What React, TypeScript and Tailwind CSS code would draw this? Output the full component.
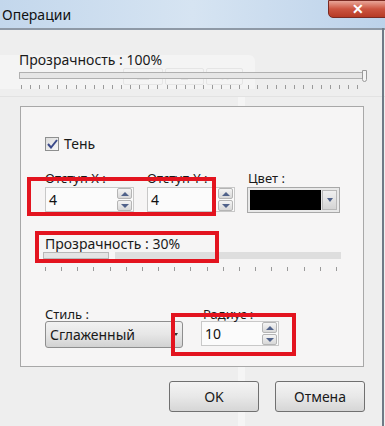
import React from "react";

const FONT = { fontFamily: '"Noto Sans", "Open Sans", "Liberation Sans", sans-serif' };

function Spin() {
  return (
    <div className="flex flex-col gap-[1px] mr-[1px]">
      <div className="w-[15px] h-[11px] border border-[#b5b5b5] rounded-[2px] bg-gradient-to-b from-[#f4f4f4] to-[#d8d8d8] flex items-center justify-center">
        <div className="w-0 h-0 border-l-[4px] border-r-[4px] border-b-[4px] border-l-transparent border-r-transparent border-b-[#50628a]" />
      </div>
      <div className="w-[15px] h-[11px] border border-[#b5b5b5] rounded-[2px] bg-gradient-to-b from-[#f4f4f4] to-[#d8d8d8] flex items-center justify-center">
        <div className="w-0 h-0 border-l-[4px] border-r-[4px] border-t-[4px] border-l-transparent border-r-transparent border-t-[#50628a]" />
      </div>
    </div>
  );
}

function NumBox({ value, w }: { value: string; w: string }) {
  return (
    <div className={`${w} h-[25px] border border-[#c8c8c8] bg-white/60 flex items-center justify-between pl-[3px]`}>
      <span className="text-[14px] text-[#111]">{value}</span>
      <Spin />
    </div>
  );
}

function Ticks({ n }: { n: number }) {
  return (
    <div className="flex justify-between">
      {Array.from({ length: n }).map((_, i) => (
        <div key={i} className="w-[1px] h-[4px] bg-[#9a9a9a]" />
      ))}
    </div>
  );
}

export default function App() {
  return (
    <div className="w-[385px] h-[426px] overflow-hidden relative bg-[#eeeeee] text-[#1a1a1a]" style={FONT}>
      {/* title bar */}
      <div className="h-[28px] bg-gradient-to-r from-[#c3d7ec] via-[#d6e4f2] to-[#bcd2ea] flex items-center pl-[2px] relative">
        <span className="text-[14px] text-[#111]">Операции</span>
        <div className="absolute right-[-6px] top-0 w-[63px] h-[18px] rounded-b-[5px] border border-[#7a2a22] bg-gradient-to-b from-[#e8a598] via-[#cc5440] to-[#b63a25] flex items-center justify-center">
          <span className="text-white text-[14px] font-bold leading-none mr-[4px]">✕</span>
        </div>
      </div>
      <div className="h-[2px] bg-[#8e99a6]" />

      {/* ghost window behind */}
      <div className="absolute left-0 top-[55px] w-[255px] h-[34px] bg-white/35 rounded-tr-[6px]" />
      <div className="absolute left-[123px] top-[68px] flex gap-[2px] opacity-40">
        <div className="w-[40px] h-[17px] border border-[#cfcfcf] rounded-[2px] flex items-end justify-center pb-[4px]"><div className="w-[12px] h-[3px] bg-[#cfcfcf]" /></div>
        <div className="w-[39px] h-[17px] border border-[#cfcfcf] rounded-[2px] flex items-center justify-center"><div className="w-[7px] h-[6px] border border-[#cfcfcf]" /></div>
        <div className="w-[37px] h-[17px] border border-[#cfcfcf] rounded-[2px] flex items-center justify-center text-[#cfcfcf] text-[12px]">✕</div>
      </div>
      <div className="absolute left-0 top-[96px] w-[385px] h-[1px] bg-[#e2e2e2]" />
      <div className="absolute left-[238px] top-[97px] w-[7px] h-[329px] bg-white/40" />
      <div className="absolute right-[1px] top-[28px] w-[2px] h-[398px] bg-[#6f7a86]" />

      <div className="relative">
        {/* top transparency */}
        <div className="pl-[19px] pr-[20px] pt-[22px]">
          <div className="text-[14px] leading-[16px]">Прозрачность : 100%</div>
          <div className="relative mt-[4px] h-[7px] border border-[#b0b0b0] bg-[#e6e6e6]">
            <div className="absolute right-[-3px] top-[-3px] w-[5px] h-[12px] rounded-b-[3px] border border-[#9a9a9a] bg-[#f4f4f4]" />
          </div>
          <div className="mt-[6px] pl-[2px] pr-[6px]">
            <Ticks n={38} />
          </div>
        </div>

        {/* group box */}
        <div className="ml-[20px] mt-[17px] w-[344px] h-[261px] border border-[#a8a8a8] bg-[#f6f5f5] pl-[24px] pt-[26px]">
          <div className="flex items-center gap-[5px]">
            <div className="w-[14px] h-[14px] border border-[#8e8f8f] bg-gradient-to-br from-[#dcdcdc] to-[#f8f8f8] flex items-center justify-center">
              <svg width="11" height="10" viewBox="0 0 11 10">
                <path d="M1 5 L4 8.5 L10 1" stroke="#3b4a8a" strokeWidth="2" fill="none" />
              </svg>
            </div>
            <span className="text-[14px]">Тень</span>
          </div>

          <div className="flex mt-[16px]">
            <div className="w-[102px]">
              <div className="text-[13px] leading-[17px]">Отступ X :</div>
              <NumBox value="4" w="w-[89px]" />
            </div>
            <div className="w-[100px]">
              <div className="text-[13px] leading-[17px]">Отступ Y :</div>
              <NumBox value="4" w="w-[88px]" />
            </div>
            <div className="w-[94px]">
              <div className="text-[13px] leading-[17px] pl-[1px]">Цвет :</div>
              <div className="w-[93px] h-[26px] border border-[#a8a8a8] bg-[#e8e8e8] flex items-center p-[2px] gap-[1px]">
                <div className="flex-1 h-full bg-black" />
                <div className="w-[15px] h-full border border-[#b8b8b8] bg-gradient-to-b from-[#f0f0f0] to-[#d4d4d4] flex items-center justify-center">
                  <div className="w-0 h-0 border-l-[3px] border-r-[3px] border-t-[4px] border-l-transparent border-r-transparent border-t-[#50628a]" />
                </div>
              </div>
            </div>
          </div>

          <div className="mt-[23px] text-[14px] leading-[16px]">Прозрачность : 30%</div>
          <div className="w-[298px] -ml-[2px] h-[7px] flex">
            <div className="w-[66px] h-full border border-[#b8b8b8] bg-[#e4e4e4]" />
            <div className="w-[6px] h-full" />
            <div className="flex-1 h-full bg-[#dedede]" />
          </div>
          <div className="w-[292px] mt-[8px]">
            <Ticks n={19} />
          </div>

          <div className="flex mt-[35px]">
            <div className="w-[156px]">
              <div className="text-[13px] leading-[17px] -mb-[2px]">Стиль :</div>
              <div className="w-[138px] h-[27px] border border-[#8e8e8e] rounded-[3px] bg-gradient-to-b from-[#f2f2f2] via-[#e6e6e6] to-[#d2d2d2] flex items-center justify-between px-[4px]">
                <span className="text-[14px]">Сглаженный</span>
                <div className="w-0 h-0 border-l-[2px] border-r-[2px] border-t-[3px] border-l-transparent border-r-transparent border-t-[#333]" />
              </div>
            </div>
            <div>
              <div className="text-[13px] leading-[17px] -mb-[2px] pl-[2px]">Радиус :</div>
              <NumBox value="10" w="w-[78px]" />
            </div>
          </div>
        </div>

        {/* buttons */}
        <div className="flex justify-end gap-[16px] pr-[20px] mt-[14px]">
          <button className="w-[90px] h-[31px] border border-[#707070] rounded-[3px] bg-gradient-to-b from-[#f4f4f4] via-[#e8e8e8] to-[#d6d6d6] text-[14px]">OK</button>
          <button className="w-[90px] h-[31px] border border-[#707070] rounded-[3px] bg-gradient-to-b from-[#f4f4f4] via-[#e8e8e8] to-[#d6d6d6] text-[14px]">Отмена</button>
        </div>
      </div>

      {/* red annotation frames */}
      <div className="absolute left-[27px] top-[177px] w-[189px] h-[39px] border-[4px] border-[#e3141f]" />
      <div className="absolute left-[35px] top-[231px] w-[184px] h-[32px] border-[4px] border-[#e3141f]" />
      <div className="absolute left-[171px] top-[313px] w-[125px] h-[43px] border-[4px] border-[#e3141f]" />
    </div>
  );
}
